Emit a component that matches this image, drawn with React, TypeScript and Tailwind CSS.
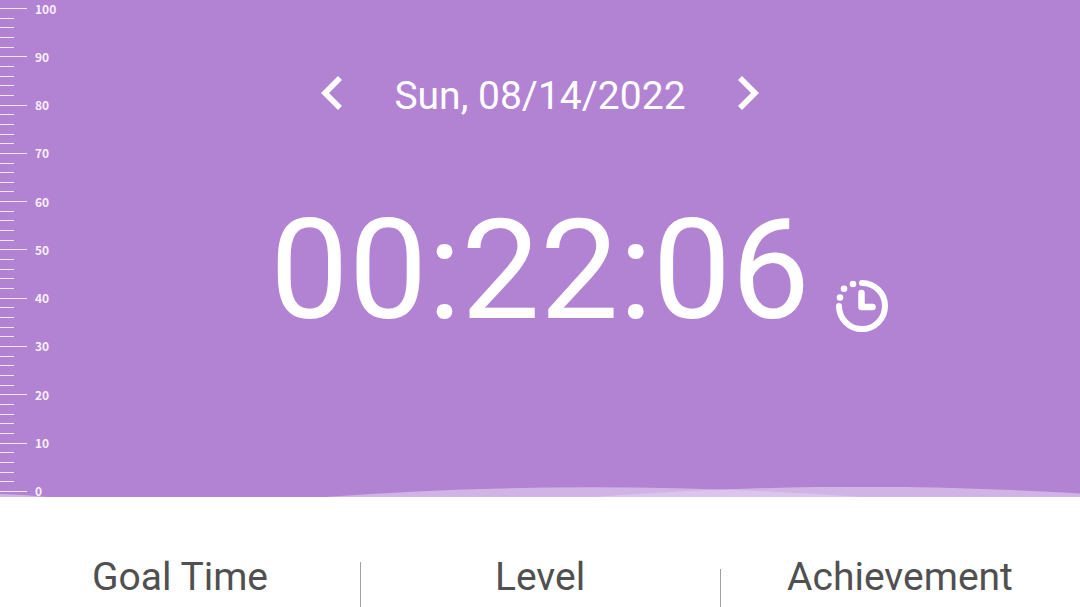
import React, { useState } from 'react'

const ticks = Array.from({ length: 51 }, (_, i) => 100 - i * 2)

function Ruler() {
  return (
    <ul className="absolute inset-y-0 left-0 flex flex-col justify-between pt-2 pb-[5px]">
      {ticks.map((value) => (
        <li key={value} className="flex h-px items-center gap-2">
          <span className={value % 10 === 0 ? 'h-px w-[27px] bg-[#f3e6fa]' : 'h-px w-[14px] bg-[#f3e6fa]'} />
          {value % 10 === 0 && (
            <span className="font-['Noto_Sans_CJK_JP','Noto_Sans',sans-serif] text-xs leading-none font-bold text-[#f8effc]">{value}</span>
          )}
        </li>
      ))}
    </ul>
  )
}

function Waves() {
  return (
    <svg className="absolute bottom-0 left-0 h-[10px] w-full" viewBox="0 0 1080 10" preserveAspectRatio="none" aria-hidden="true">
      <g fill="#e0cef1" fillOpacity="0.65">
        <path d="M0 7 Q24 7.6 47 10 H0Z" />
        <path d="M325 10 C500 -3 680 -3 862 10Z" />
        <path d="M595 10 C760 -2 900 -4 1080 6.5 V10Z" />
      </g>
    </svg>
  )
}

function ClockIcon() {
  return (
    <svg className="size-[52px]" viewBox="0 0 52 52" fill="none" stroke="#fff" strokeLinecap="round" strokeLinejoin="round" aria-hidden="true">
      <path d="M26 3 A23 23 0 1 1 3 26" strokeWidth="6" />
      <path d="M25.500 13 V27 H36.500" strokeWidth="6.500" />
      <g fill="#fff" stroke="none">
        <circle cx="17" cy="4" r="3.300" />
        <circle cx="8" cy="8.700" r="3.300" />
        <circle cx="4" cy="17.500" r="3.300" />
      </g>
    </svg>
  )
}

export default function App() {
  const [date, setDate] = useState(new Date(2022, 7, 14))

  const moveDay = (days: number) => {
    const next = new Date(date)
    next.setDate(next.getDate() + days)
    setDate(next)
  }

  const day = date.toLocaleDateString('en-US', { weekday: 'short' })
  const rest = date.toLocaleDateString('en-US', { month: '2-digit', day: '2-digit', year: 'numeric' })

  return (
    <div className="flex min-h-screen flex-col bg-white font-[Roboto,sans-serif]">
      <section className="relative bg-[#b283d2] pt-[72px] pb-[149px] text-white">
        <Waves />
        <Ruler />
        <div className="relative flex items-start justify-center gap-[52px]">
          <button type="button" aria-label="Previous day" className="mt-1" onClick={() => moveDay(-1)}>
            <svg className="h-[34px] w-[21px]" viewBox="8 6 7.41 12" fill="currentColor">
              <path d="M15.41 7.41 14 6l-6 6 6 6 1.410-1.410L10.830 12z" />
            </svg>
          </button>
          <span className="text-[39px] leading-[48px]">{day}, {rest}</span>
          <button type="button" aria-label="Next day" className="mt-1" onClick={() => moveDay(1)}>
            <svg className="h-[34px] w-[21px]" viewBox="8.590 6 7.410 12" fill="currentColor">
              <path d="M10 6 8.590 7.410 13.170 12l-4.580 4.590L10 18l6-6z" />
            </svg>
          </button>
        </div>
        <div className="relative mt-20 flex items-end justify-center">
          {/* empty cell keeps the time centred beside the icon */}
          <span className="w-[78px]" />
          <time className="pb-2 text-[140px] leading-[140px]">00:22:06</time>
          <button type="button" aria-label="Timer" className="ml-[26px] mb-4">
            <ClockIcon />
          </button>
        </div>
      </section>

      <section className="grid flex-1 grid-cols-3 text-center text-[39px] leading-[46px] text-[#505050]">
        <h2 className="pt-[57px]">Goal Time</h2>
        <div className="relative pt-[57px]">
          <span className="absolute top-[65px] bottom-0 left-0 w-px bg-[#a0a0a0]" />
          <h2>Level</h2>
          <span className="absolute top-[72px] left-full bottom-0 w-px bg-[#a0a0a0]" />
        </div>
        <h2 className="pt-[57px]">Achievement</h2>
      </section>
    </div>
  )
}
